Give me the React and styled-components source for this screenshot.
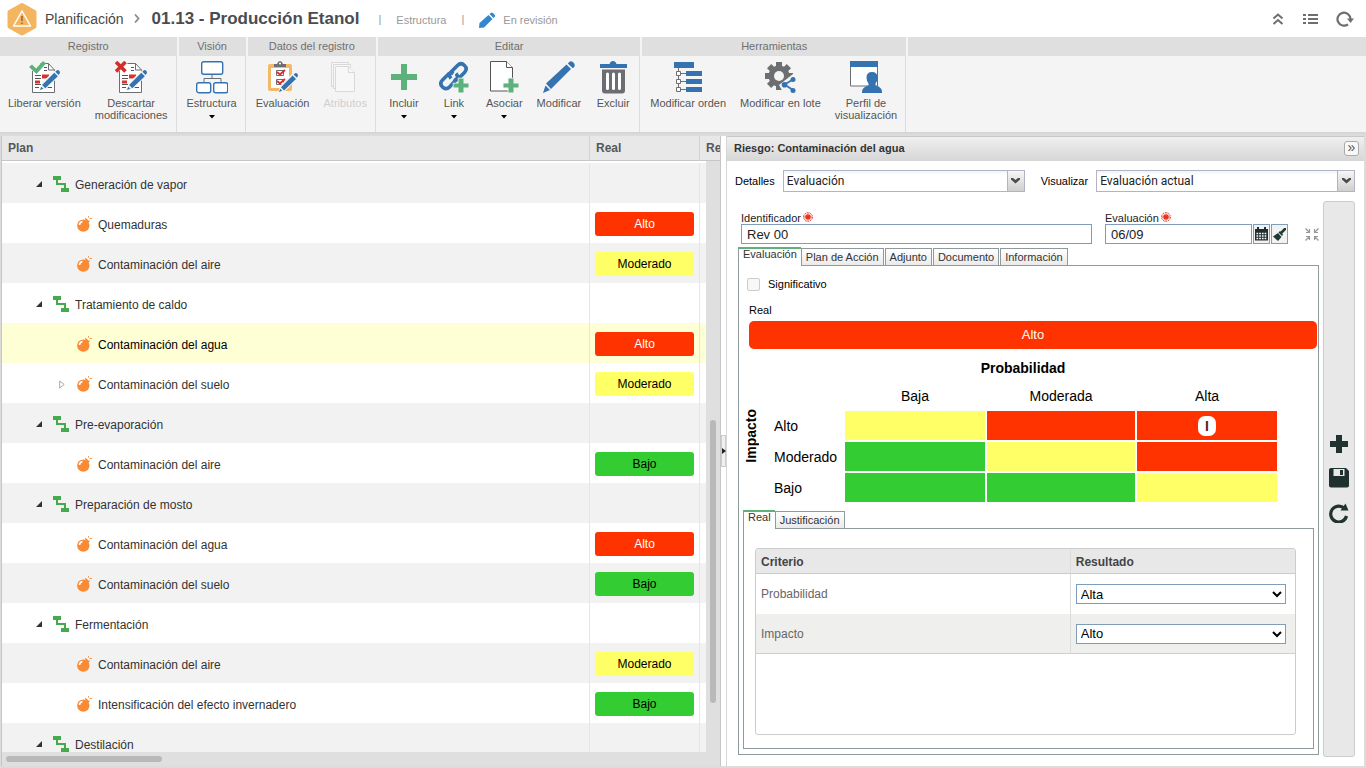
import React, { useState } from "react";
import styled, { createGlobalStyle } from "styled-components";

const BLUE = "#3572b0";
const GREEN = "#5cb27a";
const GREY = "#6d6e71";
const LEVELS = {
  Alto: { bg: "#ff3300", fg: "#ffffff" },
  Moderado: { bg: "#ffff66", fg: "#000000" },
  Bajo: { bg: "#33cc33", fg: "#000000" },
};

const treeRows = [
  { name: "Generación de vapor", group: true },
  { name: "Quemaduras", real: "Alto" },
  { name: "Contaminación del aire", real: "Moderado" },
  { name: "Tratamiento de caldo", group: true },
  { name: "Contaminación del agua", real: "Alto", selected: true },
  { name: "Contaminación del suelo", real: "Moderado", closed: true },
  { name: "Pre-evaporación", group: true },
  { name: "Contaminación del aire", real: "Bajo" },
  { name: "Preparación de mosto", group: true },
  { name: "Contaminación del agua", real: "Alto" },
  { name: "Contaminación del suelo", real: "Bajo" },
  { name: "Fermentación", group: true },
  { name: "Contaminación del aire", real: "Moderado" },
  { name: "Intensificación del efecto invernadero", real: "Bajo" },
  { name: "Destilación", group: true },
];

const matrix = [
  { label: "Alto", cells: ["Moderado", "Alto", "Alto"] },
  { label: "Moderado", cells: ["Bajo", "Moderado", "Alto"] },
  { label: "Bajo", cells: ["Bajo", "Bajo", "Moderado"] },
];

/* ---------- icons ---------- */

const Pencil = ({ x, y, size = 20 }) => (
  <g transform={`translate(${x} ${y}) scale(${size / 20})`}>
    <path d="M0 20l2-6L13.5 2.5l4 4L6 18z" fill="#f4f4f4" stroke="#f4f4f4" strokeWidth="1.5" />
    <path d="M0 20l1.2-3.2 2 2zM2 15.2L13.6 3.6l3.4 3.4L5 18.4z" fill={BLUE} />
    <path d="M14.6 2.6l1.2-1.2q1.3-1 2.5 0.300t0.4 2.6L17.6 5.6z" fill={BLUE} />
  </g>
);

const Report = ({ children }) => (
  <svg width="32" height="33" viewBox="0 0 32 33">
    <path d="M4.5 10v21.5h22V9l-6-6.500h-8" fill="#fff" stroke={GREY} />
    <path d="M20.5 2.5v6.5h6" fill="none" stroke={GREY} />
    <path
      d="M16 6.5h3M16 9.5h3M7 14.5h6M7 17.5h6M18 20.5h6M7 23.5h6M7 26.5h4M7 20.5h4M18 26.5h6"
      stroke="#555"
    />
    <path d="M14 13.5h7v4h-7zM7 19.5h5v3H7z" fill="#d9322d" />
    <Pencil x={12} y={8} size={21} />
    {children}
  </svg>
);

const ReleaseIcon = () => (
  <Report>
    <path d="M1 6l3-2.500 4 4L15 0l3 2.500L8.500 13z" fill={GREEN} />
  </Report>
);

const DiscardIcon = () => (
  <Report>
    <path d="M1 1l9.500 9.500M10.500 1L1 10.500" stroke="#d0302b" strokeWidth="3.6" />
  </Report>
);

const StructureIcon = () => (
  <svg width="32" height="33" viewBox="0 0 32 33">
    <path d="M16 13v4.500M8 21v-3.500h17V21" fill="none" stroke={GREY} />
    <g fill="#fff" stroke={BLUE} strokeWidth="1.4">
      <rect x="5.7" y="0.7" width="21" height="12.5" rx="2" />
      <rect x="0.7" y="21.7" width="14" height="10" rx="2" />
      <rect x="17.7" y="21.7" width="14" height="10" rx="2" />
    </g>
  </svg>
);

const EvaluationIcon = () => (
  <svg width="32" height="33" viewBox="0 0 32 33">
    <rect x="1" y="3" width="24" height="27" rx="2" fill="#f3b868" />
    <path d="M4 7h18v20H4z" fill="#fff" />
    <path d="M7 6V3h3q1-3 3-3t3 3h3v3z" fill={GREY} />
    <circle cx="13" cy="2.6" r="1" fill="#fff" />
    <path d="M9.5 9.5h7v5h-7zM9.5 18.5h7v5h-7z" fill="#fff" stroke={GREY} />
    <path d="M10 11l3 2.500 5-4.500M10 20l3 2.500 5-4.500" fill="none" stroke="#d9322d" strokeWidth="2" />
    <Pencil x={12} y={11} size={20} />
  </svg>
);

const AttributesIcon = () => (
  <svg width="32" height="33" viewBox="0 0 32 33">
    <g fill="#f7f7f7" stroke="#d9d9d9">
      <path d="M2.5 1.5h17v24h-17z" />
      <path d="M4.5 3.5h17v24h-17z" />
      <path d="M6.5 5.5h13l6 6v19h-19z" />
      <path d="M19.5 5.5v6h6" />
    </g>
  </svg>
);

const IncludeIcon = () => (
  <svg width="32" height="33" viewBox="0 0 32 33">
    <path d="M13 3h6v10h10v6H19v10h-6V19H3v-6h10z" fill={GREEN} />
  </svg>
);

const SmallPlus = () => (
  <path
    d="M20.5 17.5h5v5h5v4h-5v5h-5v-5h-5v-4h5z"
    fill={GREEN}
    stroke="#f4f4f4"
    strokeWidth="1.5"
    paintOrder="stroke"
  />
);

const LinkIcon = () => (
  <svg width="32" height="33" viewBox="0 0 32 33">
    <g fill="none" stroke={BLUE} strokeWidth="3.6">
      <path d="M13 17.5q-3-3.500 0-6.500l6.500-6.500q3.500-3.500 7 0t0 7l-6 6q-2.500 2.500-5 1" />
      <path d="M18 12.5q3 3.500 0 6.500l-6.500 7q-3.500 3.500-7 0t0-7l6-6q2.500-2 5-0.500" />
    </g>
    <SmallPlus />
  </svg>
);

const AssociateIcon = () => (
  <svg width="32" height="33" viewBox="0 0 32 33">
    <path d="M2.5 0.500h16l6 6v23.500h-22z" fill="#fff" stroke="#555" />
    <path d="M18.5 0.500v6h6" fill="#fff" stroke="#555" />
    <SmallPlus />
  </svg>
);

const EditIcon = () => (
  <svg width="32" height="33" viewBox="0 0 32 33">
    <path d="M0 32l2.500-7.500 4.500 4.500z" fill={BLUE} />
    <path d="M3 22.5L23.5 3.5l4.500 4.500L8 28z" fill={BLUE} />
    <path d="M24.8 2.5l1.500-1.500q1.700-1.500 4 0.500t1 4.200l-1.500 1.500z" fill={BLUE} />
  </svg>
);

const TrashIcon = () => (
  <svg width="32" height="33" viewBox="0 0 32 33">
    <path d="M3 3h9.500q1-3 3.500-3t3.500 3H30v4H3z" fill={BLUE} />
    <path d="M5 8.500h23v21q0 3-3 3H8q-3 0-3-3z" fill={GREY} />
    <path d="M10.5 13v14.500M16.5 13v14.500M22.5 13v14.500" stroke="#fff" strokeWidth="3" strokeLinecap="round" />
  </svg>
);

const OrderIcon = () => (
  <svg width="32" height="33" viewBox="0 0 32 33">
    <path d="M6.5 6v24M6 12.5h8M6 20.5h8M6 28.5h8" fill="none" stroke={GREY} />
    <path d="M2 1h20v6H2zM14 10h16v5H14zM14 18h16v5H14zM14 26h16v5H14z" fill={BLUE} />
    <path d="M4.5 10.5h4v4h-4zM4.5 18.5h4v4h-4zM4.5 26.5h4v4h-4z" fill="#fff" stroke={GREY} />
  </svg>
);

const BatchIcon = () => (
  <svg width="32" height="33" viewBox="0 0 32 33">
    <g transform="translate(15 15)">
      {[0, 45, 90, 135].map((a) => (
        <rect key={a} x="-3" y="-14" width="6" height="28" fill={GREY} transform={`rotate(${a})`} />
      ))}
      <circle r="10.5" fill={GREY} />
      <circle r="5" fill="#f4f4f4" />
    </g>
    <path d="M15 24L29 13l5 8v12H20z" fill="#f4f4f4" />
    <path d="M29 18.5l-8.500 5 8.500 5.500" fill="none" stroke={BLUE} strokeWidth="1.8" />
    <g fill={BLUE}>
      <circle cx="29" cy="18.5" r="2.5" />
      <circle cx="20.5" cy="23.7" r="2.8" />
      <circle cx="29" cy="29.5" r="2.5" />
    </g>
  </svg>
);

const ProfileIcon = () => (
  <svg width="32" height="33" viewBox="0 0 32 33">
    <path d="M0.5 0.5h27v24.500h-27z" fill="#fff" stroke={GREY} />
    <path d="M0 0h28v6H0z" fill={BLUE} />
    <path
      d="M12 32q-0.500-6 6.500-7.500v-2q-2-2-2-6 0-5.500 5.500-5.500t5.500 5.500q0 4-2 6v2q7 1.500 6.500 7.500z"
      fill={BLUE}
    />
  </svg>
);

const LogoIcon = () => (
  <svg width="30" height="34" viewBox="0 0 30 34">
    <path
      d="M15 3l12.500 7v14.500L15 31.500 2.500 24.500V10z"
      fill="#f3b55f"
      stroke="#f3b55f"
      strokeWidth="4"
      strokeLinejoin="round"
    />
    <path d="M15 9L23.500 24h-17z" fill="none" stroke="#fff" strokeWidth="1.5" strokeLinejoin="round" />
    <path d="M15 14v5M15 20.5v1.500" stroke="#a06a2c" strokeWidth="1.6" />
  </svg>
);

const StatusIcon = () => (
  <svg width="16" height="16" viewBox="0 0 16 16">
    <path
      d="M0 16l0.500-5L9.500 3l4 4L5 15.500zM10.500 2l2-1.500q1 0 2.500 1.500t1 2.500l-1.500 1.500z"
      fill="#3487cf"
    />
  </svg>
);

const Chevron = () => (
  <svg width="6" height="9" viewBox="0 0 6 9">
    <path d="M1 0.500l3.500 4-3.500 4" fill="none" stroke="#8a8d90" strokeWidth="1.8" />
  </svg>
);

const UpIcon = () => (
  <svg width="12" height="14" viewBox="0 0 12 14">
    <path d="M1.500 6.500L6 2.500l4.500 4M1.500 12L6 8l4.500 4" fill="none" stroke={GREY} strokeWidth="2" />
  </svg>
);

const ListIcon = () => (
  <svg width="16" height="12" viewBox="0 0 16 12">
    <path d="M1 2h3M1 6h3M1 10h3M6 2h10M6 6h10M6 10h10" stroke={GREY} strokeWidth="2" />
  </svg>
);

const SyncIcon = () => (
  <svg width="18" height="18" viewBox="0 0 18 18">
    <path d="M14.500 9a6.500 6.500 0 1 0-2.500 5.300" fill="none" stroke={GREY} strokeWidth="2.2" />
    <path d="M11 8.500h7l-3.500 4.500z" fill={GREY} />
  </svg>
);

const ProcessIcon = () => (
  <svg width="16" height="16" viewBox="0 0 16 16">
    <path d="M0 0h8v4H0zM8 12h8v4H8z" fill="#45aa4b" />
    <path d="M4 4v4h8v4" fill="none" stroke="#45aa4b" strokeWidth="2" />
  </svg>
);

const BombIcon = () => (
  <svg width="15" height="16" viewBox="0 0 15 16">
    <circle cx="6.3" cy="9.6" r="6.2" fill="#fb8a35" />
    <path d="M8 3.500L9.500 2.500l3 3L11 7z" fill="#fb8a35" />
    <path d="M8 2.500h1M11.5 0v1.500M12.500 2.500h2.500M12.500 4.500v1" stroke="#f09a50" />
    <path d="M2.500 9q0.300-3 3-3.500" fill="none" stroke="#fff" strokeWidth="1.6" />
  </svg>
);

const OpenIcon = () => (
  <svg width="6" height="6" viewBox="0 0 6 6">
    <path d="M6 0v6H0z" fill="#333" />
  </svg>
);

const ClosedIcon = () => (
  <svg width="6" height="9" viewBox="0 0 6 9">
    <path d="M0.700 1v7l4.500-3.500z" fill="#fff" stroke="#aaa" />
  </svg>
);

const DownArrow = () => (
  <svg width="6" height="4" viewBox="0 0 6 4">
    <path d="M0 0h6L3 3.500z" fill="#000" />
  </svg>
);

const ComboArrow = () => (
  <svg width="9" height="6" viewBox="0 0 9 6">
    <path d="M0 0h2l2.500 2L7 0h2v1.500L4.500 5.500 0 1.500z" fill="#4a4a4a" />
  </svg>
);

const RequiredIcon = () => (
  <svg width="10" height="10" viewBox="0 0 10 10">
    <circle cx="5" cy="5" r="4.4" fill="#fff" stroke="#e8452c" strokeDasharray="2 0.7" />
    <path d="M5 1.500v7M1.500 5h7M2.700 2.700l4.600 4.600M7.300 2.700L2.700 7.300" stroke="#e8301c" strokeWidth="1.3" />
  </svg>
);

const CalendarIcon = () => (
  <svg width="13" height="14" viewBox="0 0 13 14">
    <path d="M0 2h13v11.500H0zM2 0h2v3H2zM9 0h2v3H9z" fill="#222e2e" />
    <path d="M1.500 6.500h10M1.500 9h10M1.500 11.500h10" stroke="#fff" strokeDasharray="1.7 1" strokeWidth="1.5" />
  </svg>
);

const BrushIcon = () => (
  <svg width="13" height="13" viewBox="0 0 13 13">
    <path d="M0 8.500l5-3.500 3.500 4L5 13z" fill="#203a32" />
    <path d="M5.500 4.500L7 3l3 3.500L9 8z" fill="#203a32" />
    <path d="M8.500 4.500L12 1" stroke="#203a32" strokeWidth="2.5" strokeLinecap="round" />
  </svg>
);

const CollapseIcon = () => (
  <svg width="14" height="13" viewBox="0 0 14 13">
    <path
      d="M0.500 0.500l3.500 3.500M4.500 1v3.500H1M13.500 0.500L10 4M9.500 1v3.500H13M0.500 12.500L4 9M1 8.500h3.500V12M13.500 12.500L10 9M13 8.500H9.500V12"
      fill="none"
      stroke="#999"
      strokeWidth="1.2"
    />
  </svg>
);

const AddIcon = () => (
  <svg width="18" height="18" viewBox="0 0 18 18">
    <path d="M6 0h6v6h6v6h-6v6H6v-6H0V6h6z" fill="#20332f" />
  </svg>
);

const SaveIcon = () => (
  <svg width="20" height="20" viewBox="0 0 20 20">
    <path d="M2 0h15l3 3v14.500q0 2-2 2H2q-2 0-2-2V2q0-2 2-2z" fill="#20302e" />
    <path d="M4.500 1h11v7h-11z" fill="#e8e8e8" />
    <path d="M11 2h3v5h-3z" fill="#20302e" />
  </svg>
);

const ReloadIcon = () => (
  <svg width="20" height="20" viewBox="0 0 20 20">
    <path d="M15.500 5.500a8 8 0 1 0 2 7.500" fill="none" stroke="#20332f" strokeWidth="3.2" />
    <path d="M16.500 0.500L19.500 7.500h-8z" fill="#20332f" />
  </svg>
);

/* ---------- styles ---------- */

const GlobalStyle = createGlobalStyle`
  * {
    box-sizing: border-box;
  }
  body {
    margin: 0;
    font-family: "Liberation Sans", Arial, sans-serif;
    font-size: 11px;
    color: #000;
  }
  button, input, select {
    font-family: inherit;
    margin: 0;
  }
  svg {
    display: block;
    flex: none;
  }
`;

const Page = styled.div`
  display: flex;
  flex-direction: column;
  height: 100vh;
  overflow: hidden;
`;

const TopBar = styled.header`
  display: flex;
  align-items: center;
  flex: none;
  height: 37px;
  padding: 0 12px 0 7px;
  color: #999;
  background: #fff;
`;

const Crumb = styled.a`
  margin: 0 10px 0 8px;
  font-size: 14px;
  color: #45484a;
  text-decoration: none;
`;

const PageTitle = styled.h1`
  margin: 0 19px 0 12px;
  font-size: 17px;
  color: #4a4d50;
`;

const TopText = styled.span`
  margin: 2px 15px 0 15px;
`;

const Status = styled.span`
  display: flex;
  align-items: center;
  gap: 8px;
  flex: 1;
  margin-top: 2px;
  margin-left: 15px;
`;

const IconButton = styled.button`
  display: flex;
  padding: 0;
  margin-left: ${(props) => (props.$wide ? "18px" : "0")};
  border: none;
  background: none;
  cursor: pointer;
`;

const Ribbon = styled.nav`
  display: flex;
  flex: none;
  height: 97px;
  background: #f4f4f4;
  border-bottom: 2px solid #d6d6d6;
`;

const Group = styled.section`
  display: flex;
  flex-direction: column;
  flex: ${(props) => (props.$fill ? "1" : "none")};
`;

const GroupTitle = styled.h2`
  height: 19px;
  margin: 0 ${(props) => (props.$fill ? "0" : "2px")} 0 0;
  font-size: 11px;
  font-weight: normal;
  line-height: 19px;
  text-align: center;
  color: #6f6f6f;
  background: #dfdfdf;
`;

const GroupBody = styled.div`
  display: flex;
  flex: 1;
  justify-content: center;
  margin-right: 2px;
  padding: 5px 1px 0 1px;
  border-right: 1px solid ${(props) => (props.$fill ? "transparent" : "#dcdcdc")};
`;

const ToolButton = styled.button`
  display: flex;
  flex-direction: column;
  align-items: center;
  gap: 3px;
  min-width: 50px;
  padding: 0 7px;
  border: none;
  background: none;
  font-size: 11px;
  line-height: 12px;
  color: #555;
  white-space: pre-line;
  cursor: pointer;

  &:disabled {
    color: #d0d0d0;
  }
  span + svg {
    margin-top: 3px;
  }
`;

const Workspace = styled.main`
  display: grid;
  grid-template-columns: minmax(0, 720fr) 5px minmax(0, 638fr);
  flex: 1;
  min-height: 0;
  padding: 2px 2px 2px 1px;
  background: #dcdcdc;
`;

const TreePanel = styled.section`
  display: flex;
  flex-direction: column;
  min-height: 0;
  border: solid #c6c6c6;
  border-width: 0 1px 0 1px;
  background: #dfdfdf;
`;

const TreeTable = styled.table`
  width: 100%;
  table-layout: fixed;
  border-spacing: 0;
  font-size: 12px;
`;

const HeadCell = styled.th`
  height: 25px;
  padding: 0 0 1px 6px;
  overflow: hidden;
  text-align: left;
  white-space: nowrap;
  color: #55585a;
  background: #e8e8e8;
  border-bottom: 1px solid #c6c6c6;
  border-right: 1px solid #d2d2d2;

  &:last-child {
    border-right: none;
  }
`;

const TreeBody = styled.div`
  display: flex;
  flex: 1;
  min-height: 0;
`;

const TreeScroll = styled.div`
  flex: 1;
  min-width: 0;
  padding-top: 2px;
  overflow: hidden;
  background: #fff;
`;

const TreeRow = styled.tr`
  background: #fff;

  &:nth-child(odd) {
    background: #f2f2f2;
  }
  &&[aria-selected="true"] {
    background: #ffffd5;
  }
`;

const Cell = styled.td`
  height: 40px;
  padding: 2px 5px 0 5px;
  border-right: 1px solid #e6e6e6;

  &:last-child {
    border-right: none;
  }
`;

const Node = styled.div`
  display: flex;
  align-items: center;
  padding-left: ${(props) => (props.$group ? "29px" : "52px")};
  color: ${(props) => (props.$selected ? "#000" : "#333")};
`;

const Toggle = styled.span`
  display: flex;
  flex: none;
  width: ${(props) => (props.$group ? "17px" : "18px")};
`;

const NodeName = styled.span`
  margin-left: 6px;
  padding-top: 1px;
`;

const Level = styled.div`
  height: 24px;
  border-radius: 3px;
  line-height: 24px;
  text-align: center;
  color: ${(props) => LEVELS[props.$level].fg};
  background: ${(props) => LEVELS[props.$level].bg};
`;

const VerticalTrack = styled.div`
  display: grid;
  grid-template-rows: 259fr 283fr 49fr;
  width: 14px;
  padding: 0 4px;
`;

const HorizontalTrack = styled.div`
  flex: none;
  height: 14px;
  padding: 4px;
`;

const Thumb = styled.div`
  grid-row: 2;
  width: ${(props) => (props.$horizontal ? "22%" : "6px")};
  min-height: 6px;
  border-radius: 3px;
  background: #b9b9b9;
`;

const Splitter = styled.div`
  display: flex;
  align-items: center;
  background: #fff;
`;

const SplitHandle = styled.button`
  display: flex;
  align-items: center;
  justify-content: center;
  width: 5px;
  height: 32px;
  padding: 0;
  border: 1px solid #ccc;
  background: #f0f0f0;
`;

const Detail = styled.section`
  display: flex;
  flex-direction: column;
  min-width: 0;
  min-height: 0;
  border-left: 1px solid #d6d6d6;
  background: #fff;
`;

const DetailHeader = styled.div`
  display: flex;
  align-items: center;
  justify-content: space-between;
  flex: none;
  height: 25px;
  padding: 0 5px 2px 7px;
  border-top: 1px solid #c8c8c8;
  background: linear-gradient(#f0f0f0, #d6d6d6);
`;

const DetailTitle = styled.h2`
  margin: 0 0 1px 0;
  font-size: 11px;
  color: #333;
`;

const SmallButton = styled.button`
  width: 15px;
  height: 15px;
  padding: 0 0 2px 0;
  border: 1px solid #aaa;
  border-radius: 3px;
  font-size: 14px;
  line-height: 11px;
  color: #555;
  background: #f8f8f8;
`;

const Filters = styled.div`
  display: grid;
  grid-template-columns: auto 242fr auto 259fr;
  align-items: center;
  flex: none;
  gap: 8px;
  padding: 9px 9px 9px 8px;
`;

const FilterLabel = styled.label`
  &:not(:first-child) {
    margin-left: 8px;
  }
`;

const Combo = styled.div`
  display: grid;
  grid-template-columns: 1fr 17px;
  height: 22px;
  border: 1px solid #b0b4c4;
`;

const ComboSelect = styled.select`
  grid-area: 1 / 1 / 2 / 3;
  appearance: none;
  padding: 0 3px;
  border: none;
  border-radius: 0;
  font-family: Roboto, Tahoma, sans-serif;
  font-size: 12px;
  color: #222;
  background: linear-gradient(#f0f2f5, #fff 4px);
`;

const ComboButton = styled.span`
  display: flex;
  grid-area: 1 / 2 / 2 / 3;
  align-items: center;
  justify-content: center;
  z-index: 1;
  border-left: 1px solid #b0b4c4;
  background: linear-gradient(#f6f6f6, #cfcfcf);
  pointer-events: none;
`;

const DetailBody = styled.div`
  display: flex;
  flex: 1;
  min-height: 0;
  gap: 4px;
  padding: 0 9px 9px 11px;
`;

const Form = styled.form`
  display: flex;
  flex-direction: column;
  flex: 1;
  min-width: 0;
  padding: 11px 0 2px 0;
`;

const Fields = styled.div`
  display: flex;
  align-items: flex-end;
  gap: 13px;
  padding-left: 3px;
  margin-bottom: 3px;
`;

const Field = styled.div`
  flex: ${(props) => props.$grow};
  min-width: 0;
`;

const FieldLabel = styled.label`
  display: flex;
  gap: 2px;
  height: 12px;
  line-height: 12px;
  color: #222;
`;

const InputRow = styled.div`
  display: flex;
  gap: 1px;
`;

const TextInput = styled.input`
  flex: 1;
  min-width: 0;
  height: 20px;
  padding: 0 5px;
  border: 1px solid #7f9db9;
  font-size: 13px;
  color: #222;
`;

const InputButton = styled.button`
  display: flex;
  align-items: center;
  justify-content: center;
  width: 17px;
  height: 20px;
  padding: 0;
  border: 1px solid #7f9db9;
  background: #f2f2f2;
`;

const CollapseButton = styled.button`
  display: flex;
  padding: 0;
  margin: 0 0 3px 4px;
  border: none;
  background: none;
`;

const Tabs = styled.div`
  display: flex;
  align-items: flex-end;
  position: relative;
  z-index: 1;
  flex: none;
  height: 19px;
  margin-bottom: -1px;
`;

const Tab = styled.button`
  height: 18px;
  padding: 0 4px;
  margin-right: 1px;
  border: 1px solid #8f9a9c;
  font-size: 11px;
  line-height: 16px;
  color: #333;
  background: linear-gradient(#fff, #eaeaea);

  &[aria-selected="true"] {
    height: 19px;
    padding: 0 4px 7px 4px;
    margin-right: 0;
    border-top: 2px solid ${GREEN};
    border-right: none;
    border-bottom: none;
    line-height: 10px;
    background: #fff;
  }
`;

const TabPanel = styled.div`
  display: flex;
  flex-direction: column;
  flex: 1;
  min-height: 0;
  padding: 11px 4px 5px 4px;
  border: 1px solid #8f9a9c;
`;

const CheckLabel = styled.label`
  display: flex;
  align-items: center;
  gap: 8px;
  height: 14px;
  margin-left: 4px;
`;

const CheckBox = styled.input`
  appearance: none;
  width: 13px;
  height: 13px;
  border: 1px solid #ccc;
  border-radius: 2px;
  background: #f8f8f8;
`;

const RealLabel = styled.div`
  margin: 13px 0 5px 6px;
  line-height: 12px;
`;

const RealLevel = styled.div`
  flex: none;
  height: 28px;
  margin: 0 -3px 4px 6px;
  border-radius: 5px;
  font-size: 13px;
  line-height: 28px;
  text-align: center;
  color: #fff;
  background: #ff3300;
`;

const MatrixArea = styled.div`
  display: flex;
  align-items: flex-start;
  gap: 8px;
  margin-bottom: 6px;
`;

const Axis = styled.div`
  width: 16px;
  margin-top: 56px;
  font-size: 14px;
  font-weight: bold;
  line-height: 16px;
  writing-mode: vertical-rl;
  transform: rotate(180deg);
`;

const Matrix = styled.table`
  width: 512px;
  max-width: 100%;
  table-layout: fixed;
  border-spacing: 2px;
  font-size: 14px;

  th {
    height: 26px;
    padding: 0;
    font-weight: normal;
  }
  th[scope="row"] {
    padding-left: 5px;
    text-align: left;
  }
  th[scope="colgroup"] {
    font-weight: bold;
  }
`;

const MatrixCell = styled.td`
  height: 29px;
  padding: 0;
  background: ${(props) => LEVELS[props.$level].bg};
`;

const Marker = styled.div`
  width: 18px;
  height: 20px;
  margin: 0 auto;
  border-radius: 7px;
  font-size: 14px;
  font-weight: bold;
  line-height: 20px;
  text-align: center;
  color: #5a2020;
  background: #fff;
`;

const CriteriaPanel = styled(TabPanel)`
  padding: 19px 17px 13px 11px;
`;

const CriteriaBox = styled.div`
  flex: 1;
  min-height: 0;
  overflow: hidden;
  border: 1px solid #ccc;
  border-radius: 3px;
`;

const CriteriaTable = styled.table`
  width: 100%;
  table-layout: fixed;
  border-spacing: 0;
  font-size: 12px;

  th {
    height: 25px;
    padding: 1px 5px 0 5px;
    text-align: left;
    color: #444;
    background: #e8e8e8;
    border-bottom: 1px solid #ccc;
  }
  td {
    height: 40px;
    padding: 0 9px 0 5px;
    color: #666;
  }
  th:first-child,
  td:first-child {
    border-right: 1px solid #dcdcdc;
  }
  tbody tr:last-child td {
    background: #efefed;
    border-bottom: 1px solid #d0d0d0;
  }
`;

const CriteriaSelect = styled.select`
  display: block;
  width: 100%;
  height: 20px;
  border: 1px solid #7f9db9;
  border-radius: 0;
  font-size: 13px;
  color: #000;
  background-color: #fff;
`;

const SideBar = styled.div`
  display: flex;
  flex-direction: column;
  align-items: center;
  justify-content: center;
  gap: 15px;
  width: 32px;
  border: 1px solid #ccc;
  border-radius: 3px;
  background: #e8e8e8;
`;

/* ---------- components ---------- */

function Tool({ icon, label, menu, disabled }) {
  return (
    <ToolButton type="button" disabled={disabled}>
      {icon}
      <span>{label}</span>
      {menu && <DownArrow />}
    </ToolButton>
  );
}

function RibbonGroup({ title, children }) {
  return (
    <Group>
      <GroupTitle>{title}</GroupTitle>
      <GroupBody>{children}</GroupBody>
    </Group>
  );
}

function Toolbar() {
  return (
    <Ribbon>
      <RibbonGroup title="Registro">
        <Tool icon={<ReleaseIcon />} label="Liberar versión" />
        <Tool icon={<DiscardIcon />} label={"Descartar\nmodificaciones"} />
      </RibbonGroup>
      <RibbonGroup title="Visión">
        <Tool icon={<StructureIcon />} label="Estructura" menu />
      </RibbonGroup>
      <RibbonGroup title="Datos del registro">
        <Tool icon={<EvaluationIcon />} label="Evaluación" />
        <Tool icon={<AttributesIcon />} label="Atributos" disabled />
      </RibbonGroup>
      <RibbonGroup title="Editar">
        <Tool icon={<IncludeIcon />} label="Incluir" menu />
        <Tool icon={<LinkIcon />} label="Link" menu />
        <Tool icon={<AssociateIcon />} label="Asociar" menu />
        <Tool icon={<EditIcon />} label="Modificar" />
        <Tool icon={<TrashIcon />} label="Excluir" />
      </RibbonGroup>
      <RibbonGroup title="Herramientas">
        <Tool icon={<OrderIcon />} label="Modificar orden" />
        <Tool icon={<BatchIcon />} label="Modificar en lote" />
        <Tool icon={<ProfileIcon />} label={"Perfil de\nvisualización"} />
      </RibbonGroup>
      <Group $fill>
        <GroupTitle $fill />
        <GroupBody $fill />
      </Group>
    </Ribbon>
  );
}

function Tree() {
  return (
    <TreePanel>
      <TreeTable>
        <colgroup>
          <col />
          <col width="110" />
          <col width="20" />
        </colgroup>
        <thead>
          <tr>
            <HeadCell>Plan</HeadCell>
            <HeadCell>Real</HeadCell>
            <HeadCell>Re</HeadCell>
          </tr>
        </thead>
      </TreeTable>
      <TreeBody>
        <TreeScroll>
          <TreeTable>
            <colgroup>
              <col />
              <col width="110" />
              <col width="6" />
            </colgroup>
            <tbody>
              {treeRows.map((row, i) => (
                <TreeRow key={i} aria-selected={!!row.selected}>
                  <Cell>
                    <Node $group={row.group} $selected={row.selected}>
                      <Toggle $group={row.group}>
                        {row.group && <OpenIcon />}
                        {row.closed && <ClosedIcon />}
                      </Toggle>
                      {row.group ? <ProcessIcon /> : <BombIcon />}
                      <NodeName>{row.name}</NodeName>
                    </Node>
                  </Cell>
                  <Cell>{row.real && <Level $level={row.real}>{row.real}</Level>}</Cell>
                  <Cell />
                </TreeRow>
              ))}
            </tbody>
          </TreeTable>
        </TreeScroll>
        <VerticalTrack>
          <Thumb />
        </VerticalTrack>
      </TreeBody>
      <HorizontalTrack>
        <Thumb $horizontal />
      </HorizontalTrack>
    </TreePanel>
  );
}

function TabList({ names, active, onSelect }) {
  return (
    <Tabs role="tablist">
      {names.map((name) => (
        <Tab
          key={name}
          type="button"
          role="tab"
          aria-selected={name === active}
          onClick={() => onSelect(name)}
        >
          {name}
        </Tab>
      ))}
    </Tabs>
  );
}

function RiskMatrix() {
  return (
    <MatrixArea>
      <Axis>Impacto</Axis>
      <Matrix>
        <colgroup>
          <col width="74" />
          <col width="140" />
          <col width="148" />
          <col width="140" />
        </colgroup>
        <thead>
          <tr>
            <th colSpan="4" scope="colgroup">Probabilidad</th>
          </tr>
          <tr>
            <th />
            <th scope="col">Baja</th>
            <th scope="col">Moderada</th>
            <th scope="col">Alta</th>
          </tr>
        </thead>
        <tbody>
          {matrix.map((row, r) => (
            <tr key={row.label}>
              <th scope="row">{row.label}</th>
              {row.cells.map((level, c) => (
                <MatrixCell key={c} $level={level}>
                  {r === 0 && c === 2 && <Marker>I</Marker>}
                </MatrixCell>
              ))}
            </tr>
          ))}
        </tbody>
      </Matrix>
    </MatrixArea>
  );
}

function Criteria() {
  return (
    <CriteriaBox>
      <CriteriaTable>
        <colgroup>
          <col width="58.4%" />
          <col />
        </colgroup>
        <thead>
          <tr>
            <th>Criterio</th>
            <th>Resultado</th>
          </tr>
        </thead>
        <tbody>
          <tr>
            <td>
              <label htmlFor="prob">Probabilidad</label>
            </td>
            <td>
              <CriteriaSelect id="prob" defaultValue="Alta">
                <option>Baja</option>
                <option>Moderada</option>
                <option>Alta</option>
              </CriteriaSelect>
            </td>
          </tr>
          <tr>
            <td>
              <label htmlFor="impact">Impacto</label>
            </td>
            <td>
              <CriteriaSelect id="impact" defaultValue="Alto">
                <option>Bajo</option>
                <option>Moderado</option>
                <option>Alto</option>
              </CriteriaSelect>
            </td>
          </tr>
        </tbody>
      </CriteriaTable>
    </CriteriaBox>
  );
}

function RiskDetail() {
  const [tab, setTab] = useState("Evaluación");
  const [innerTab, setInnerTab] = useState("Real");

  return (
    <Detail>
      <DetailHeader>
        <DetailTitle>Riesgo: Contaminación del agua</DetailTitle>
        <SmallButton type="button" aria-label="Ocultar">»</SmallButton>
      </DetailHeader>
      <Filters>
        <FilterLabel htmlFor="details">Detalles</FilterLabel>
        <Combo>
          <ComboSelect id="details">
            <option>Evaluación</option>
          </ComboSelect>
          <ComboButton>
            <ComboArrow />
          </ComboButton>
        </Combo>
        <FilterLabel htmlFor="view">Visualizar</FilterLabel>
        <Combo>
          <ComboSelect id="view">
            <option>Evaluación actual</option>
          </ComboSelect>
          <ComboButton>
            <ComboArrow />
          </ComboButton>
        </Combo>
      </Filters>
      <DetailBody>
        <Form>
          <Fields>
            <Field $grow="351">
              <FieldLabel htmlFor="code">
                Identificador <RequiredIcon />
              </FieldLabel>
              <InputRow>
                <TextInput id="code" defaultValue="Rev 00" />
              </InputRow>
            </Field>
            <Field $grow="183">
              <FieldLabel htmlFor="date">
                Evaluación <RequiredIcon />
              </FieldLabel>
              <InputRow>
                <TextInput id="date" defaultValue="06/09" />
                <InputButton type="button" aria-label="Calendario">
                  <CalendarIcon />
                </InputButton>
                <InputButton type="button" aria-label="Limpiar">
                  <BrushIcon />
                </InputButton>
              </InputRow>
            </Field>
            <CollapseButton type="button" aria-label="Contraer">
              <CollapseIcon />
            </CollapseButton>
          </Fields>
          <TabList
            names={["Evaluación", "Plan de Acción", "Adjunto", "Documento", "Información"]}
            active={tab}
            onSelect={setTab}
          />
          <TabPanel>
            <CheckLabel>
              <CheckBox type="checkbox" />
              Significativo
            </CheckLabel>
            <RealLabel>Real</RealLabel>
            <RealLevel>Alto</RealLevel>
            <RiskMatrix />
            <TabList names={["Real", "Justificación"]} active={innerTab} onSelect={setInnerTab} />
            <CriteriaPanel>
              <Criteria />
            </CriteriaPanel>
          </TabPanel>
        </Form>
        <SideBar>
          <IconButton type="button" aria-label="Agregar">
            <AddIcon />
          </IconButton>
          <IconButton type="button" aria-label="Guardar">
            <SaveIcon />
          </IconButton>
          <IconButton type="button" aria-label="Actualizar">
            <ReloadIcon />
          </IconButton>
        </SideBar>
      </DetailBody>
    </Detail>
  );
}

export default function App() {
  return (
    <Page>
      <GlobalStyle />
      <TopBar>
        <LogoIcon />
        <Crumb href="#">Planificación</Crumb>
        <Chevron />
        <PageTitle>01.13 - Producción Etanol</PageTitle>
        <span>|</span>
        <TopText>Estructura</TopText>
        <span>|</span>
        <Status>
          <StatusIcon />
          En revisión
        </Status>
        <IconButton $wide type="button" aria-label="Subir">
          <UpIcon />
        </IconButton>
        <IconButton $wide type="button" aria-label="Lista">
          <ListIcon />
        </IconButton>
        <IconButton $wide type="button" aria-label="Sincronizar">
          <SyncIcon />
        </IconButton>
      </TopBar>
      <Toolbar />
      <Workspace>
        <Tree />
        <Splitter>
          <SplitHandle type="button" aria-label="Mover división">
            <svg width="4" height="6" viewBox="0 0 4 6">
              <path d="M0 0l4 3-4 3z" fill="#222" />
            </svg>
          </SplitHandle>
        </Splitter>
        <RiskDetail />
      </Workspace>
    </Page>
  );
}
